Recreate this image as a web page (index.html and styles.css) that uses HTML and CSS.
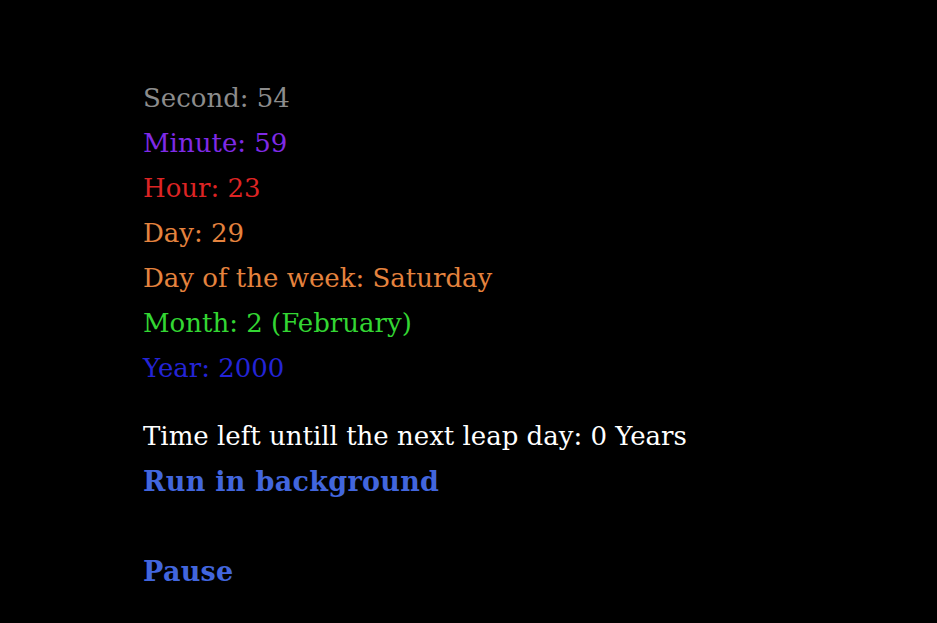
FILE: index.html
```html
<!DOCTYPE html>
<html>
<head>
<meta charset="utf-8">
<link rel="stylesheet" href="styles.css">
</head>
<body>
<main class="clock">
  <div class="units">
    <div class="line second">Second: 54</div>
    <div class="line minute">Minute: 59</div>
    <div class="line hour">Hour: 23</div>
    <div class="line day">Day: 29</div>
    <div class="line dow">Day of the week: Saturday</div>
    <div class="line month">Month: 2 (February)</div>
    <div class="line year">Year: 2000</div>
  </div>
  <div class="leap">Time left untill the next leap day: 0 Years</div>
  <a class="action" href="#">Run in background</a>
  <a class="action pause" href="#">Pause</a>
</main>
</body>
</html>
```
FILE: styles.css
```css
html, body {
  margin: 0;
  padding: 0;
  background: #000;
}
body {
  font-family: "DejaVu Serif", "Liberation Serif", serif;
  font-size: 26px;
  line-height: 45px;
}
.clock {
  display: flex;
  flex-direction: column;
  align-items: flex-start;
  padding: 76px 0 0 143px;
}
.units {
  display: flex;
  flex-direction: column;
}
.second { color: #8c8c8c; }
.minute { color: #7f2ae6; }
.hour { color: #dd2424; }
.day, .dow { color: #e5833e; }
.month { color: #33d633; }
.year { color: #2424d6; }
.leap {
  color: #fff;
  margin-top: 23px;
}
.action {
  color: #4266dd;
  font-size: 27px;
  font-weight: bold;
  letter-spacing: 0.3px;
  text-decoration: none;
}
.pause {
  margin-top: 45px;
}
```
